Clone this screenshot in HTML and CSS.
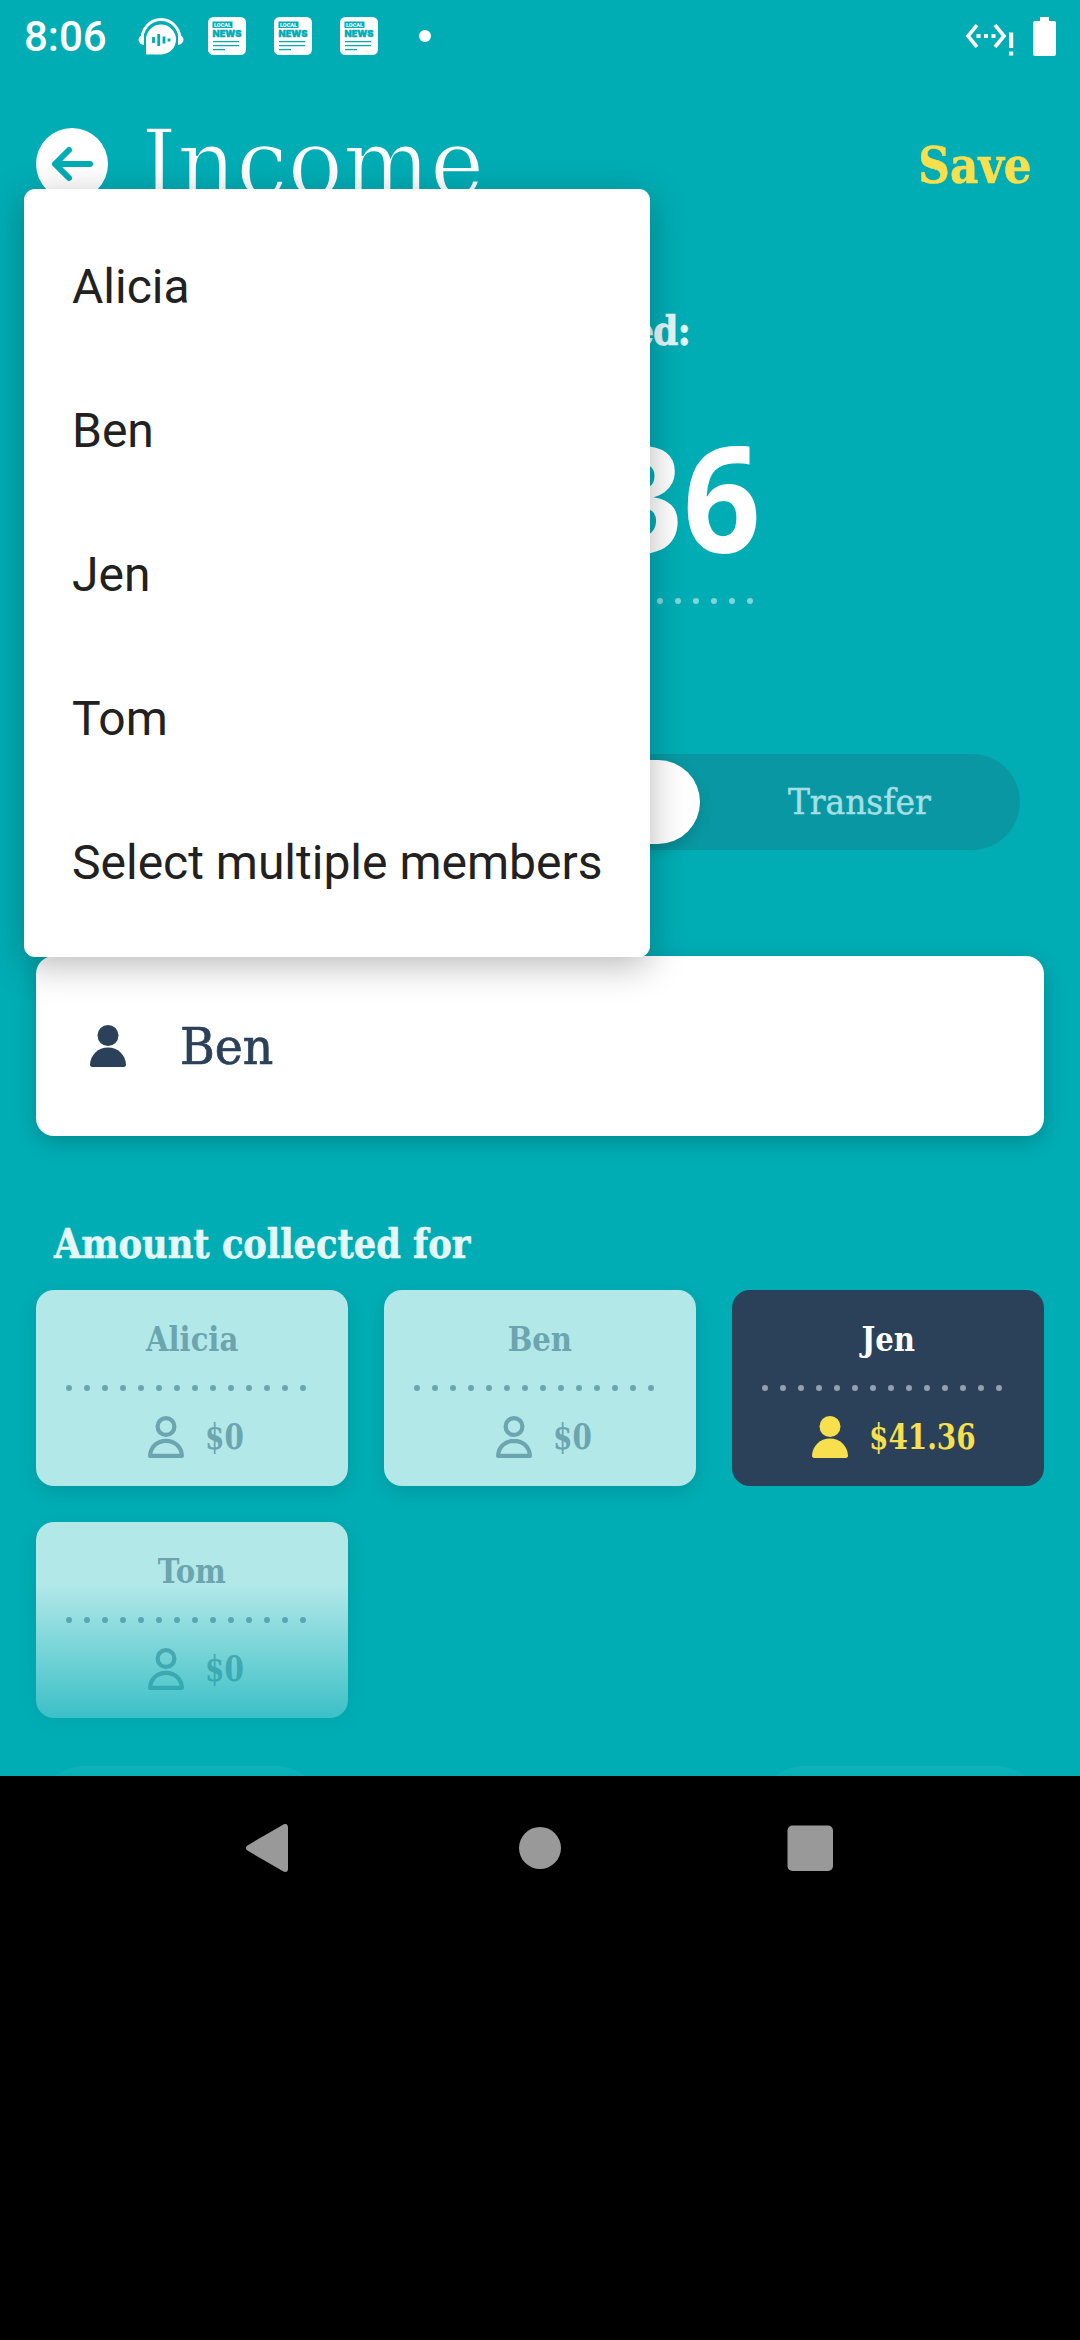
FILE: index.html
```html
<!DOCTYPE html>
<html lang="en">
<head>
<meta charset="utf-8">
<title>Income</title>
<link rel="stylesheet" href="styles.css">
</head>
<body>
<svg width="0" height="0" class="defs">
  <symbol id="person" viewBox="0 0 36 42">
    <circle cx="18" cy="10.5" r="10.5"/>
    <path d="M18 22.5c10 0 17.500 7.500 18 17 0 1.500-.8 2.500-2.200 2.500H2.200C.8 42 0 41 0 39.500c.5-9.500 8-17 18-17z"/>
  </symbol>
  <symbol id="person-line" viewBox="0 0 36 42">
    <g fill="none" stroke="currentColor" stroke-width="4.200" stroke-linejoin="round">
      <circle cx="18" cy="10.500" r="8.400"/>
      <path d="M18 24.900c-9 0-15.500 6-15.900 15h31.800c-.4-9-6.900-15-15.900-15z"/>
    </g>
  </symbol>
</svg>
<main class="screen">
  <div class="app">
    <div class="status">
      <span class="clock">8:06</span>
      <svg class="headset" viewBox="0 0 46 38">
        <path d="M4 25C3 12 12 2.500 23 2.500s20 9.500 19 22.500" fill="none" stroke="#fff" stroke-width="3"/>
        <path d="M6 17v11C3 28 .5 25 .5 22.500S3 18 6 17zM40 17v11c3 0 5.500-3 5.500-5.500S43 18 40 17z" fill="#fff"/>
        <path d="M8 37.500V22.500a15 15 0 1 1 15 15z" fill="#fff"/>
        <path d="M15.500 20v6M20.700 17v12M26 19.500v7M31 21.500v3" stroke="#00adb5" stroke-width="2.800"/>
      </svg>
      <svg class="news" viewBox="0 0 38 38">
        <rect width="38" height="38" rx="5.500" fill="#fff"/>
        <rect x="4.500" y="4.500" width="20" height="6.500" fill="#00adb5"/>
        <text x="6" y="9.800" class="news-local" textLength="17" lengthAdjust="spacingAndGlyphs">LOCAL</text>
        <text x="4.500" y="20.300" class="news-word" textLength="29" lengthAdjust="spacingAndGlyphs">NEWS</text>
        <path d="M5 24.700h26M5 28.700h26M5 32.700h12" stroke="#00adb5" stroke-width="1.200"/>
      </svg>
      <svg class="news" viewBox="0 0 38 38">
        <rect width="38" height="38" rx="5.500" fill="#fff"/>
        <rect x="4.500" y="4.500" width="20" height="6.500" fill="#00adb5"/>
        <text x="6" y="9.800" class="news-local" textLength="17" lengthAdjust="spacingAndGlyphs">LOCAL</text>
        <text x="4.500" y="20.300" class="news-word" textLength="29" lengthAdjust="spacingAndGlyphs">NEWS</text>
        <path d="M5 24.700h26M5 28.700h26M5 32.700h12" stroke="#00adb5" stroke-width="1.200"/>
      </svg>
      <svg class="news" viewBox="0 0 38 38">
        <rect width="38" height="38" rx="5.500" fill="#fff"/>
        <rect x="4.500" y="4.500" width="20" height="6.500" fill="#00adb5"/>
        <text x="6" y="9.800" class="news-local" textLength="17" lengthAdjust="spacingAndGlyphs">LOCAL</text>
        <text x="4.500" y="20.300" class="news-word" textLength="29" lengthAdjust="spacingAndGlyphs">NEWS</text>
        <path d="M5 24.700h26M5 28.700h26M5 32.700h12" stroke="#00adb5" stroke-width="1.200"/>
      </svg>
      <i class="more"></i>
      <svg class="net" viewBox="0 0 50 32">
        <path d="M12 1L3 12l9 11M30 1l9 11-9 11" fill="none" stroke="#fff" stroke-width="3.600"/>
        <path d="M11.500 10h4v4h-4zM19 10h4v4h-4zM26.500 10h4v4h-4zM44 8.500h4.200v15.500H44zM44 27.500h4.200v4H44z" fill="#fff"/>
      </svg>
      <svg class="battery" viewBox="0 0 23 39"><path d="M7 0h9v4h5q2 0 2 2v31q0 2-2 2H2q-2 0-2-2V6q0-2 2-2h5z" fill="#fff"/></svg>
    </div>

    <header class="header">
      <svg class="back" viewBox="0 0 72 72"><circle cx="36" cy="36" r="36" fill="#fff"/><path d="M54 36H19M33 22L19 36l14 14" fill="none" stroke="#00adb5" stroke-width="6" stroke-linecap="round" stroke-linejoin="round"/></svg>
      <h1 class="title">Income</h1>
      <span class="save slab">Save</span>
    </header>

    <section class="amount">
      <div class="amount-label slab">Amount added:</div>
      <div class="amount-value">$41.36</div>
      <svg class="amount-dots" viewBox="0 0 432 6"><path d="M3 3H430" class="dots"/></svg>
    </section>

    <div class="tabs">
      <span class="tab">Expense</span>
      <span class="tab tab-on">Income</span>
      <span class="tab tab-last"><span class="slab tab-text">Transfer</span></span>
    </div>

    <div class="picker">
      <svg class="person"><use href="#person"/></svg>
      <span class="picker-name slab">Ben</span>
    </div>

    <h2 class="subhead slab">Amount collected for</h2>
    <div class="grid">
      <div class="card">
        <div class="name slab">Alicia</div>
        <svg class="rule" viewBox="0 0 240 6"><path d="M3 3H238" class="dots"/></svg>
        <div class="sum"><svg class="person"><use href="#person-line"/></svg><span class="money zero"><span class="slab">$0</span></span></div>
      </div>
      <div class="card">
        <div class="name slab">Ben</div>
        <svg class="rule" viewBox="0 0 240 6"><path d="M3 3H238" class="dots"/></svg>
        <div class="sum"><svg class="person"><use href="#person-line"/></svg><span class="money zero"><span class="slab">$0</span></span></div>
      </div>
      <div class="card card-on">
        <div class="name slab">Jen</div>
        <svg class="rule" viewBox="0 0 240 6"><path d="M3 3H238" class="dots"/></svg>
        <div class="sum"><svg class="person"><use href="#person"/></svg><span class="money full"><span class="slab">$41.36</span></span></div>
      </div>
      <div class="card">
        <div class="name slab">Tom</div>
        <svg class="rule" viewBox="0 0 240 6"><path d="M3 3H238" class="dots"/></svg>
        <div class="sum"><svg class="person"><use href="#person-line"/></svg><span class="money zero"><span class="slab">$0</span></span></div>
      </div>
    </div>
    <div class="footer"><i class="pill"></i><i class="pill"></i></div>
    <div class="fade"></div>

    <ul class="menu">
      <li>Alicia</li>
      <li>Ben</li>
      <li>Jen</li>
      <li>Tom</li>
      <li>Select multiple members</li>
    </ul>
  </div>

  <nav class="nav">
    <svg class="nav-icon" viewBox="0 0 48 48"><path d="M39 3v42L3 24z" fill="#999" stroke="#999" stroke-width="6" stroke-linejoin="round"/></svg>
    <svg class="nav-icon" viewBox="0 0 48 48"><circle cx="24" cy="24" r="21" fill="#999"/></svg>
    <svg class="nav-icon" viewBox="0 0 48 48"><rect x="1.500" y="1.500" width="45.500" height="45.500" rx="5" fill="#999"/></svg>
  </nav>
</main>
</body>
</html>
```
FILE: styles.css
```css
* { box-sizing: border-box; margin: 0; padding: 0; }
body { width: 1080px; height: 2340px; background: #000; font-family: Roboto, sans-serif; overflow: hidden; }
.defs { position: absolute; }
.news-local { font: 900 5px Roboto, sans-serif; fill: #fff; }
.news-word { font: 900 9px Inter, sans-serif; fill: #00adb5; stroke: #00adb5; stroke-width: .4; }

.slab {
  display: inline-block;
  font-family: "Roboto Slab", "DejaVu Serif Condensed", "DejaVu Serif", serif;
  font-stretch: condensed;
  font-weight: 700;
  white-space: nowrap;
}

.app { position: relative; width: 1080px; height: 1776px; background: #00adb5; overflow: hidden; }

.status { display: flex; align-items: center; height: 72px; padding: 0 24px; color: #fff; }
.clock { width: 114px; font-size: 42px; font-weight: 500; line-height: 72px; padding-top: 2px; }
.headset { width: 46px; height: 38px; margin-right: 24px; }
.news { width: 38px; height: 38px; margin-right: 28px; }
.more { width: 12px; height: 12px; border-radius: 50%; background: #fff; margin-left: 13px; }
.net { width: 50px; height: 32px; margin: 8px 18px 0 auto; }
.battery { width: 23px; height: 39px; }

.header { display: flex; height: 184px; padding: 0 48px 0 36px; }
.back { width: 72px; height: 72px; margin-top: 56px; }
.title {
  margin: 37px 0 0 33px;
  font: 400 94px/110px "Roboto Slab", "DejaVu Serif Condensed", "DejaVu Serif", serif;
  font-stretch: condensed;
  color: #fff;
  -webkit-text-stroke: 1.6px #00adb5;
  transform-origin: left;
  transform: scaleX(1.085);
}
.save { margin: 57px 0 0 auto; font-size: 51px; line-height: 72px; color: #f7df4e; -webkit-text-stroke: .5px; transform-origin: right; transform: scaleX(.955); }

.amount { display: flex; flex-direction: column; align-items: center; height: 498px; color: #fff; }
.amount-label { margin: 47px 0 0 3px; font-size: 41px; line-height: 56px; color: #e6f7f8; -webkit-text-stroke: .6px; letter-spacing: -1px; transform: scaleX(.985); }
.amount-value { margin: 35px 0 0 14px; height: 204px; font: 700 147px/204px "Open Sans", sans-serif; transform: scaleX(.925); }
.amount-dots { width: 432px; height: 6px; margin: 0 0 0 18px; color: #80d6da; }
.dots { fill: none; stroke: currentColor; stroke-width: 6; stroke-linecap: round; stroke-dasharray: 0 18; }

.tabs { display: flex; width: 960px; height: 96px; margin: 0 60px; padding: 6px; border-radius: 48px; background: #0998a3; font-size: 36px; }
.tab { flex: 1; display: flex; align-items: center; justify-content: center; border-radius: 42px; color: #a5dfe3; }
.tab-on { flex: 0 0 324px; background: #fff; color: #2b4159; box-shadow: 0 6px 14px rgba(0, 0, 0, .14); }
.tab-last { padding-left: 4px; }
.tab-text { font-weight: 400; -webkit-text-stroke: .5px; margin-top: -2px; transform: scaleX(1.016); }

.picker { display: flex; align-items: center; height: 180px; margin: 106px 36px 0; padding: 0 54px; border-radius: 18px; background: #fff; color: #2b4159; box-shadow: 0 6px 22px rgba(0, 0, 0, .2); }
.person { width: 36px; height: 42px; fill: currentColor; flex: none; }
.picker-name { margin: 2px 0 0 54px; font-size: 51px; font-weight: 400; line-height: 72px; -webkit-text-stroke: .7px; transform-origin: left; transform: scaleX(1.033); }

.subhead { display: block; height: 60px; margin: 78px 0 16px 54px; font-size: 41px; line-height: 60px; color: #e6f7f8; -webkit-text-stroke: .6px; transform-origin: left; transform: scaleX(.955); }
.grid { display: grid; grid-template-columns: repeat(3, 312px); gap: 36px; padding: 0 36px; }
.card { display: flex; flex-direction: column; align-items: center; height: 196px; border-radius: 18px; background: #b3e8e9; color: #6ba5af; box-shadow: 0 6px 18px rgba(0, 0, 0, .12); }
.name { margin-top: 26px; height: 48px; font-size: 33px; line-height: 48px; transform: scaleX(.98); }
.rule { width: 240px; height: 6px; margin: 21px 0 0 -12px; }
.sum { display: flex; align-items: center; margin: 24px 0 0 8px; height: 44px; gap: 22px; }
.money { display: flex; font-size: 36px; line-height: 44px; margin-top: -2px; }
.money .slab { transform-origin: left; transform: translateX(-1px) scaleX(.86); }
.zero { width: 38px; }
.full { width: 103px; }
.card-on { background: #2b4159; color: #f7df4e; box-shadow: none; }
.card-on .name { color: #fff; }
.card-on .rule { color: #95a0ac; }

.footer { display: flex; justify-content: space-between; padding: 48px 36px 0; }
.pill { width: 288px; height: 96px; border-radius: 48px; background: rgba(255, 255, 255, .7); }
.fade { position: absolute; left: 0; right: 0; bottom: 0; height: 192px; background: linear-gradient(rgba(0, 173, 181, 0), rgba(0, 173, 181, .96)); }

.menu { position: absolute; left: 24px; top: 189px; width: 626px; height: 768px; padding: 24px 48px; border-radius: 11px; background: #fff; color: #212121; list-style: none; box-shadow: 0 8px 36px rgba(0, 0, 0, .28); }
.menu li { height: 144px; font-size: 48px; line-height: 148px; white-space: nowrap; }

.nav { display: flex; justify-content: center; gap: 222px; padding-top: 48px; }
.nav-icon { width: 48px; height: 48px; }
```
